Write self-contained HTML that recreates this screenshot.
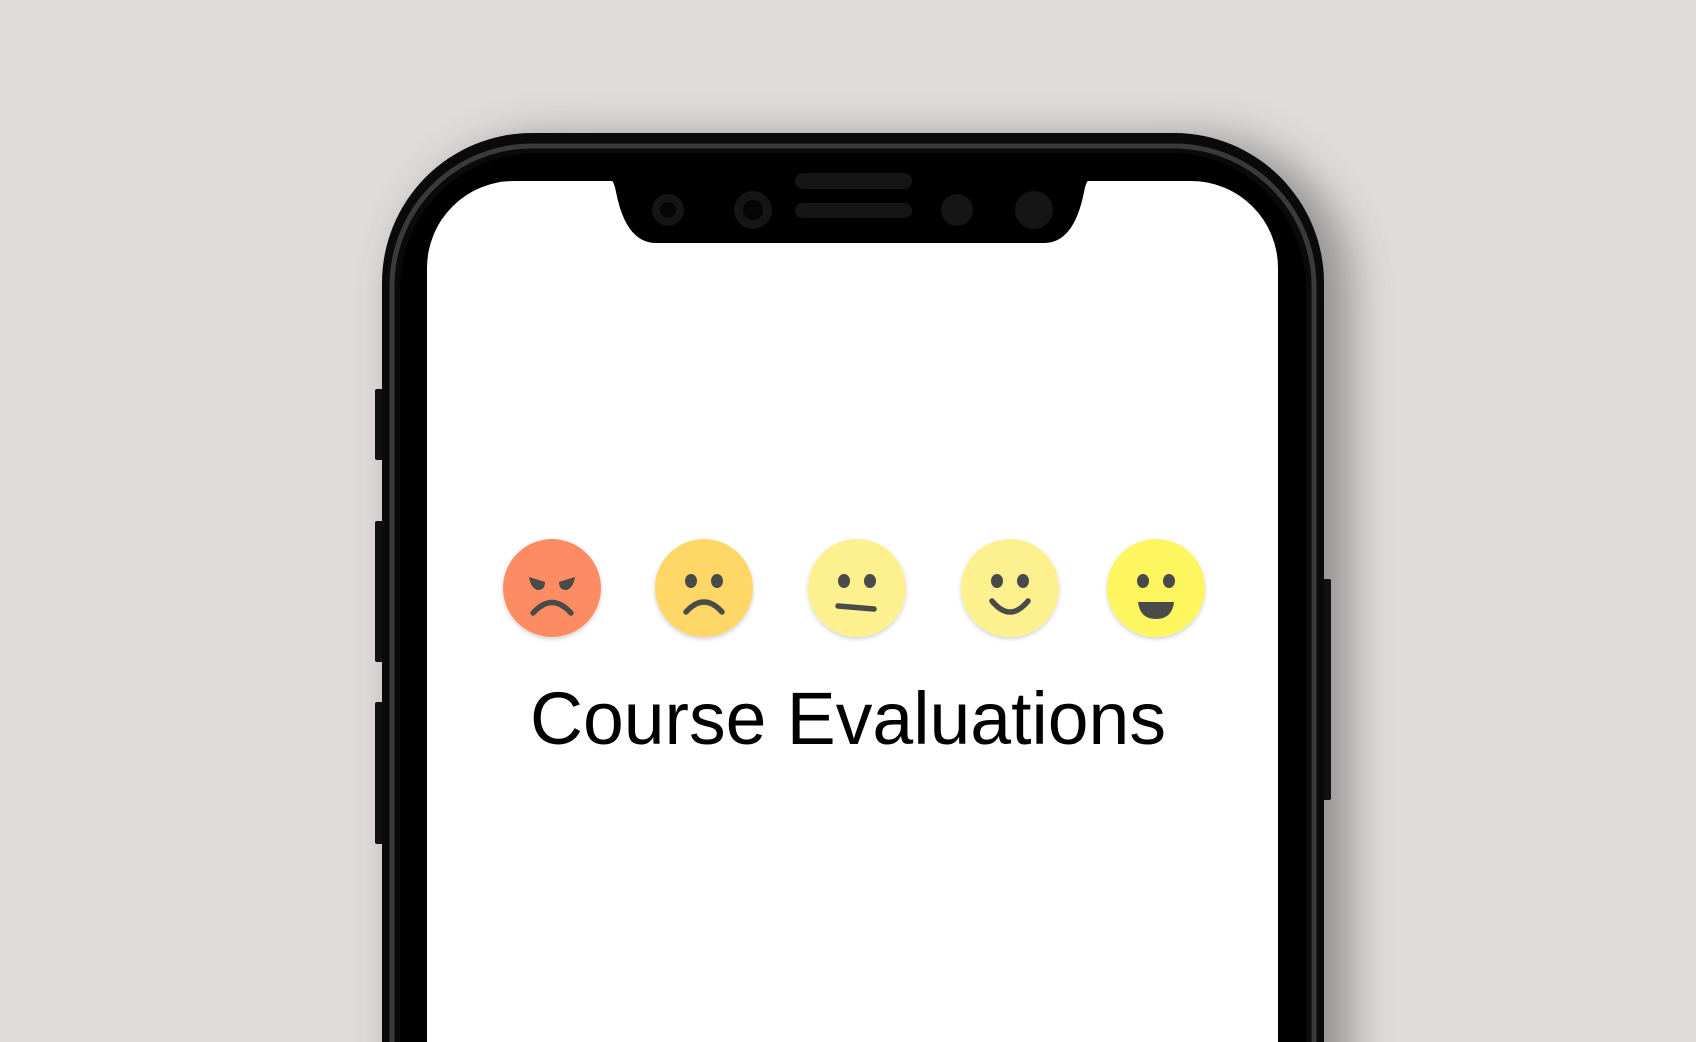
<!DOCTYPE html>
<html><head><meta charset="utf-8"><style>
html,body{margin:0;padding:0;width:1696px;height:1042px;overflow:hidden;background:#dfdcdb}
svg{display:block}
</style></head><body>
<svg width="1696" height="1042" viewBox="0 0 1696 1042" xmlns="http://www.w3.org/2000/svg">
<defs>
<filter id="sh" x="-20%" y="-20%" width="140%" height="140%"><feGaussianBlur stdDeviation="22"/></filter>
<filter id="fs" x="-20%" y="-20%" width="140%" height="140%"><feDropShadow dx="0" dy="2" stdDeviation="2" flood-color="#000" flood-opacity="0.18"/></filter>
</defs>
<rect width="1696" height="1042" fill="#dfdcdb"/>
<path d="M400 1100 V290 A150 150 0 0 1 550 140 H1180 A150 150 0 0 1 1350 290 V1100 Z" fill="#444" opacity="0.5" filter="url(#sh)"/>
<rect x="375" y="389" width="9" height="71" rx="2" fill="#111"/>
<rect x="375" y="521" width="9" height="141" rx="2" fill="#111"/>
<rect x="375" y="702" width="9" height="142" rx="2" fill="#111"/>
<rect x="1322" y="579" width="9" height="221" rx="2" fill="#111"/>
<path d="M382 1060 V283 A150 150 0 0 1 532 133 H1174 A150 150 0 0 1 1324 283 V1060 Z" fill="#0a0a0a"/>
<path d="M392 1060 V286 A140 140 0 0 1 532 146 H1174 A140 140 0 0 1 1314 286 V1060" fill="none" stroke="#3a3a3a" stroke-width="5"/>
<path d="M400 1060 V288 A135 135 0 0 1 535 153 H1171 A135 135 0 0 1 1306 288 V1060 Z" fill="#000"/>
<path d="M427 1060 V268 A87 87 0 0 1 514 181 H1191 A87 87 0 0 1 1278 268 V1060 Z" fill="#fff"/>
<path d="M600 176 H608 Q614 180 616 192 Q626 243 656 243 H1044 Q1074 243 1084 192 Q1086 180 1092 176 H1100 V170 H600 Z" fill="#000"/>
<rect x="795" y="173" width="117" height="16" rx="8" fill="#151515"/>
<rect x="795" y="203" width="117" height="15" rx="7.5" fill="#151515"/>
<circle cx="668" cy="210" r="16" fill="#151515"/><circle cx="668" cy="210" r="8" fill="#050505"/>
<circle cx="753" cy="210" r="19" fill="#151515"/><circle cx="753" cy="210" r="10" fill="#050505"/>
<circle cx="957" cy="210" r="16" fill="#151515"/>
<circle cx="1034" cy="210" r="19" fill="#151515"/>
<g fill="#4a4a4a" stroke="#4a4a4a">
<g transform="translate(552,588)">
<circle r="49" fill="#fe8c63" stroke="none" filter="url(#fs)"/>
<path d="M-23 -11 L-7 -6 Q-7 2 -14 2 Q-21 1 -23 -11Z" stroke="none"/>
<path d="M23 -11 L7 -6 Q7 2 14 2 Q21 1 23 -11Z" stroke="none"/>
<path d="M-19 25 Q0 4 19 25" fill="none" stroke-width="5.5" stroke-linecap="round"/>
</g>
<g transform="translate(704,588)">
<circle r="49" fill="#fed766" stroke="none" filter="url(#fs)"/>
<ellipse cx="-13" cy="-7" rx="6" ry="7" stroke="none"/><ellipse cx="13" cy="-7" rx="6" ry="7" stroke="none"/>
<path d="M-18 24 Q0 4 18 24" fill="none" stroke-width="5.5" stroke-linecap="round"/>
</g>
<g transform="translate(857,588)">
<circle r="49" fill="#fdf08f" stroke="none" filter="url(#fs)"/>
<ellipse cx="-13" cy="-7" rx="6" ry="7" stroke="none"/><ellipse cx="13" cy="-7" rx="6" ry="7" stroke="none"/>
<path d="M-19 18 L17 21" fill="none" stroke-width="5.5" stroke-linecap="round"/>
</g>
<g transform="translate(1010,588)">
<circle r="49" fill="#fdf08f" stroke="none" filter="url(#fs)"/>
<ellipse cx="-13" cy="-7" rx="6" ry="7" stroke="none"/><ellipse cx="13" cy="-7" rx="6" ry="7" stroke="none"/>
<path d="M-18 13 Q0 35 18 13" fill="none" stroke-width="5.5" stroke-linecap="round"/>
</g>
<g transform="translate(1156,588)">
<circle r="49" fill="#fef65e" stroke="none" filter="url(#fs)"/>
<ellipse cx="-13" cy="-7" rx="6" ry="7" stroke="none"/><ellipse cx="13" cy="-7" rx="6" ry="7" stroke="none"/>
<path d="M-18 14 H18 Q16 31 0 31 Q-16 31 -18 14Z" stroke="none"/>
</g>
</g>
<text x="530" y="744" font-family="Liberation Sans, sans-serif" font-size="74" fill="#000" textLength="636" lengthAdjust="spacingAndGlyphs">Course Evaluations</text>
</svg>
</body></html>
